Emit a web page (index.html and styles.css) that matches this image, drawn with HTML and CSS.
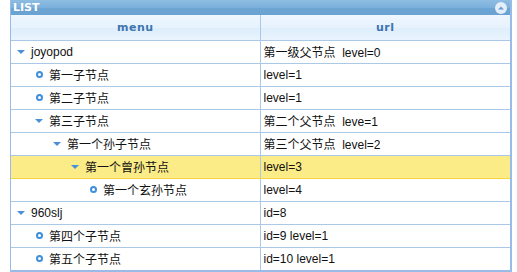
FILE: index.html
```html
<!DOCTYPE html>
<html lang="zh-CN">
  <head>
    <meta charset="UTF-8" />
    <title>LIST</title>
    <link rel="stylesheet" href="styles.css">
  </head>
  <body>
    <div class="panel">
      <div class="panel-title">
        <span>LIST</span>
        <span class="collapse-btn">
          <svg width="12" height="12" viewBox="0 0 12 12">
            <circle cx="6" cy="6" r="6" fill="#e4eef8" />
            <path d="M3 7.5 L6 4.5 L9 7.5 Z" fill="#6a9ccd" />
          </svg>
        </span>
      </div>
      <table class="tree">
        <thead>
          <tr>
            <th class="col-menu">menu</th>
            <th>url</th>
          </tr>
        </thead>
        <tbody>
          <tr>
            <td><span class="node lv0"><i class="icon open"></i>joyopod</span></td>
            <td>第一级父节点&nbsp;&nbsp;level=0</td>
          </tr>
          <tr>
            <td><span class="node lv1"><i class="icon leaf"></i>第一子节点</span></td>
            <td>level=1</td>
          </tr>
          <tr>
            <td><span class="node lv1"><i class="icon leaf"></i>第二子节点</span></td>
            <td>level=1</td>
          </tr>
          <tr>
            <td><span class="node lv1"><i class="icon open"></i>第三子节点</span></td>
            <td>第二个父节点&nbsp;&nbsp;leve=1</td>
          </tr>
          <tr>
            <td><span class="node lv2"><i class="icon open"></i>第一个孙子节点</span></td>
            <td>第三个父节点&nbsp;&nbsp;level=2</td>
          </tr>
          <tr class="selected">
            <td><span class="node lv3"><i class="icon open"></i>第一个曾孙节点</span></td>
            <td>level=3</td>
          </tr>
          <tr>
            <td><span class="node lv4"><i class="icon leaf"></i>第一个玄孙节点</span></td>
            <td>level=4</td>
          </tr>
          <tr>
            <td><span class="node lv0"><i class="icon open"></i>960slj</span></td>
            <td>id=8</td>
          </tr>
          <tr>
            <td><span class="node lv1"><i class="icon leaf"></i>第四个子节点</span></td>
            <td>id=9 level=1</td>
          </tr>
          <tr>
            <td><span class="node lv1"><i class="icon leaf"></i>第五个子节点</span></td>
            <td>id=10 level=1</td>
          </tr>
        </tbody>
      </table>
    </div>
  </body>
</html>
```

FILE: styles.css
```css
/* Base */
* {
  box-sizing: border-box;
}
body {
  margin: 0;
  background-color: white;
  font-family: "Liberation Sans", "Noto Sans CJK SC", sans-serif;
  font-size: 12px;
  color: #111;
}

/* Panel */
.panel {
  width: 502px;
  margin-left: 10px;
  border-left: 1px solid #99bbe8;
  border-right: 2px solid #99bbe8;
  border-bottom: 2px solid #99bbe8;
}
.panel-title {
  height: 15px;
  display: flex;
  align-items: center;
  justify-content: space-between;
  padding: 0 3px 0 2px;
  background: linear-gradient(#8fbde2, #7bb0dc 50%, #6ca4d4 51%, #6aa2d2);
  color: white;
  font-family: "DejaVu Sans", sans-serif;
  font-weight: bold;
  font-size: 11px;
}
.collapse-btn {
  display: flex;
}

/* Tree table */
.tree {
  width: 100%;
  border-collapse: collapse;
  table-layout: fixed;
}
.tree th {
  height: 25px;
  background: linear-gradient(#eef6fe, #e6f2fd 50%, #ddedfb 51%, #e9f4fe);
  color: #3d75b0;
  font-family: "DejaVu Sans", sans-serif;
  font-size: 11px;
  font-weight: bold;
  letter-spacing: 0.5px;
  text-align: center;
  border-bottom: 1px solid #a9c9e6;
  border-right: 1px solid #a9c9e6;
  padding: 0;
}
.tree th:last-child,
.tree td:last-child {
  border-right: none;
}
.tree .col-menu {
  width: 249px;
}
.tree td {
  height: 23px;
  padding: 0 0 0 3px;
  border-bottom: 1px solid #a9c9e6;
  border-right: 1px solid #a9c9e6;
  white-space: nowrap;
}
.tree tbody tr:last-child td {
  border-bottom: none;
}
.tree td:first-child {
  padding-left: 2px;
}
.tree tr.selected td {
  background-color: #fbec88;
  border-bottom-color: #f5d63c;
}

/* Nodes */
.node {
  display: flex;
  align-items: center;
}
.lv1 { padding-left: 18px; }
.lv2 { padding-left: 36px; }
.lv3 { padding-left: 54px; }
.lv4 { padding-left: 72px; }
.icon {
  width: 16px;
  height: 16px;
  margin-right: 2px;
  display: flex;
  align-items: center;
  justify-content: center;
}
.icon.open::before {
  content: "";
  border-left: 4px solid transparent;
  border-right: 4px solid transparent;
  border-top: 4px solid #4a90d6;
  margin-top: 1px;
}
.icon.leaf::before {
  content: "";
  box-sizing: border-box;
  width: 7px;
  height: 7px;
  border: 2px solid #3f8fdc;
  border-radius: 50%;
  background-color: white;
}
```
